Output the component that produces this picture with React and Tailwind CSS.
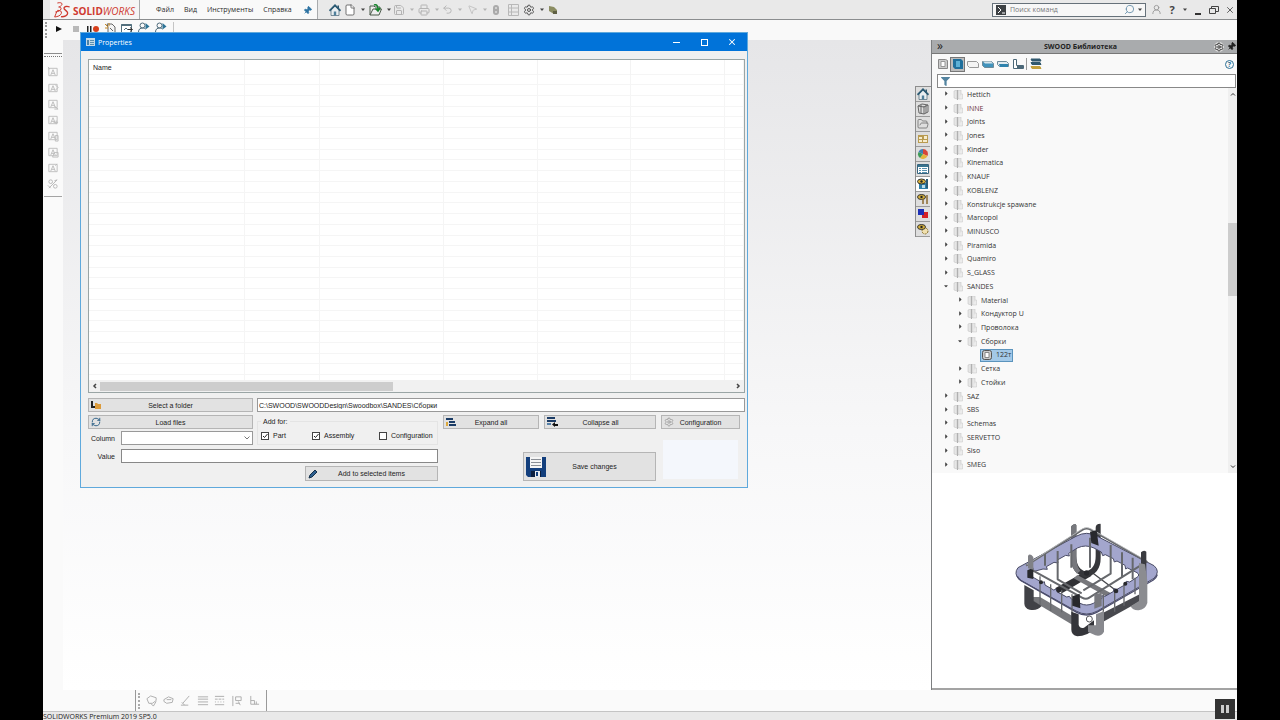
import React, { useState } from "react";
import {
  File,
  FolderOpen,
  MousePointer2,
  Pin,
  Printer,
  RefreshCw,
  Save,
  Search,
  Settings,
  Undo2,
  UserRound,
  X,
} from "lucide-react";
import { FaCaretDown, FaCaretRight, FaFilter } from "react-icons/fa";

const menus = ["Файл", "Вид", "Инструменты", "Справка"];

const treeItems = [
  { name: "Hettich" },
  { name: "INNE", color: "text-[#6b2f3c]" },
  { name: "Joints" },
  { name: "Jones" },
  { name: "Kinder" },
  { name: "Kinematica" },
  { name: "KNAUF" },
  { name: "KOBLENZ" },
  { name: "Konstrukcje spawane" },
  { name: "Marcopol" },
  { name: "MINUSCO" },
  { name: "Piramida" },
  { name: "Quamiro" },
  { name: "S_GLASS" },
  { name: "SANDES", open: true },
  { name: "Material", level: 1 },
  { name: "Кондуктор U", level: 1 },
  { name: "Проволока", level: 1 },
  { name: "Сборки", level: 1, open: true },
  { name: "122т", level: 2 },
  { name: "Сетка", level: 1 },
  { name: "Стойки", level: 1 },
  { name: "SAZ" },
  { name: "SBS" },
  { name: "Schemas" },
  { name: "SERVETTO" },
  { name: "Siso" },
  { name: "SMEG" },
];

const Caret = () => (
  <svg viewBox="0 0 4 3" className="h-[3px] w-1 shrink-0" fill="currentColor">
    <path d="M0 .5h4L2 3z" />
  </svg>
);

const HomeIcon = () => (
  <svg viewBox="0 0 12 12" className="h-3 w-3 shrink-0">
    <path d="M2 6l4-4 4 4v5.500H2z" fill="#e9eef1" stroke="#5b7483" strokeWidth=".8" />
    <path d="M4.800 7.500h2.400v4H4.800z" fill="#4f7f9b" />
    <path d="M8.500 1.500H10v3H8.500z" fill="#35586c" />
    <path d="M.5 6.800L6 1.300l5.500 5.500" fill="none" stroke="#2b5a74" strokeWidth="1.700" />
  </svg>
);

const ToolButton = ({ label, menu, width = "w-[25px]", children, className = "" }) => (
  <button
    title={label}
    aria-label={label}
    className={`flex h-full shrink-0 items-center gap-[5px] ${width} ${className}`}
  >
    {children}
    {menu && <Caret />}
  </button>
);

const Logo = () => (
  <div className="flex h-full w-[89px] shrink-0 items-center gap-[3px] bg-[#f5f5f5] pl-[4px] text-[#cf3a30]">
    <svg viewBox="0 0 48 48" className="h-4 w-4 shrink-0" fill="none" stroke="currentColor">
      <path d="M10 3c8-2 15-1 14 4-1 4-6 7-10 8 6 0 8 2 7 6-1 5-9 8-17 9" strokeWidth="3" />
      <path d="M2 45c3-8 6-16 9-20 8 0 13 3 11 9-2 7-11 10-20 11z" strokeWidth="3" />
      <path d="M47 15c-8-3-16-2-17 3-1 6 11 8 11 15 0 7-9 12-20 11" strokeWidth="4" />
    </svg>
    <span className="pt-[3px] text-[10px] leading-3">
      <b>SOLID</b>
      <i>WORKS</i>
    </span>
  </div>
);

const MenuBar = () => (
  <header className="flex h-5 shrink-0 items-stretch border-b border-[#8b8d8f] bg-[#e9e9e9] pl-[7px]">
    <Logo />
    <nav className="flex w-[179px] shrink-0 items-center gap-[10px] border-x border-[#a9abad] bg-[#f9f9f9] pt-px pl-4 text-[7px]">
      {menus.map((menu) => (
        <button key={menu} className="font-medium">
          {menu}
        </button>
      ))}
      <button aria-label="Pin menu" className="ml-auto mr-[5px] text-[#2f74a3]">
        <Pin size={9} fill="currentColor" className="rotate-45" />
      </button>
    </nav>

    <div className="flex items-center pl-[11px] text-[#454545]">
      <ToolButton label="Home" width="w-[15px]">
        <HomeIcon />
      </ToolButton>
      <ToolButton label="New" menu>
        <File size={12} fill="#fff" strokeWidth={1.5} />
      </ToolButton>
      <ToolButton label="Open" menu width="w-6">
        <svg viewBox="0 0 13 12" className="h-3 w-[13px]" fill="none" stroke="#4a5a4a">
          <path d="M1 11V2h4l1 1h5v2M1 11l3-6h8.500l-2.500 6z" fill="#eee" />
          <path d="M5 1c3-1 4 1 4 5M6.500 4.500l2.500 2.500 2-3" stroke="#16832b" strokeWidth="1.500" />
        </svg>
      </ToolButton>
      <ToolButton label="Save" menu className="text-[#b4b4b4]">
        <Save size={12} />
      </ToolButton>
      <ToolButton label="Print" menu width="w-6" className="text-[#b4b4b4]">
        <Printer size={12} />
      </ToolButton>
      <ToolButton label="Undo" menu className="text-[#b4b4b4]">
        <Undo2 size={11} />
      </ToolButton>
      <ToolButton label="Select" menu className="text-[#b4b4b4]">
        <MousePointer2 size={11} strokeWidth={1.5} />
      </ToolButton>
      <ToolButton label="Rebuild" width="w-4">
        <svg viewBox="0 0 8 12" className="h-3 w-2">
          <rect x="1" y="1" width="6" height="10" rx="3" fill="#aaa" />
          <circle cx="4" cy="4" r="1" fill="#ddd" />
          <circle cx="4" cy="8" r="1" fill="#ddd" />
        </svg>
      </ToolButton>
      <ToolButton label="File properties" width="w-[15px]">
        <svg viewBox="0 0 11 12" className="h-3 w-[11px]" fill="none" stroke="#b8b8b8">
          <path d="M.5.5h10v11H.5zM3.500.5v11M.5 4h10M.5 8h10" />
        </svg>
      </ToolButton>
      <ToolButton label="Options" menu>
        <Settings size={12} strokeWidth={1.8} />
      </ToolButton>
      <ToolButton label="Model" width="w-3">
        <svg viewBox="0 0 10 10" className="h-[10px] w-[10px]">
          <path d="M1 1l5 1 3 3v4H6L1 6z" fill="#8b8d62" />
          <path d="M5 9V6h4v3z" fill="#5f6044" />
        </svg>
      </ToolButton>
    </div>

    <div className="ml-auto flex items-center text-[#444]">
      <label className="mr-[3px] flex h-[14px] w-[154px] items-center border border-[#66717a] bg-[#f7f7f7] pl-[3px]">
        <svg viewBox="0 0 10 10" className="h-[10px] w-[10px] shrink-0">
          <path d="M0 0h10v10H0z" fill="#3d4144" />
          <path d="M2 2l3 3-3 3M6 8h3" stroke="#fff" fill="none" />
        </svg>
        <input
          aria-label="Поиск команд"
          placeholder="Поиск команд"
          className="min-w-0 flex-1 px-1 text-[7px] outline-none placeholder:text-[#77797b]"
        />
        <Search size={11} className="mr-[3px] -scale-x-100 text-[#6b93ad]" />
        <Caret />
        <span className="w-[3px]" />
      </label>
      <button aria-label="Account" className="w-[15px] pl-[2px] text-[#999]">
        <UserRound size={11} />
      </button>
      <button aria-label="Help" className="w-4 text-center text-[11px] leading-3 font-bold">
        ?
      </button>
      <button aria-label="Help menu" className="w-[11px] pl-[3px]">
        <Caret />
      </button>
      <button aria-label="Minimize" className="flex h-3 w-[14px] items-end justify-center pb-px">
        <span className="h-[2px] w-[6px] bg-[#333]" />
      </button>
      <button aria-label="Restore" className="flex w-[18px] justify-center">
        <svg viewBox="0 0 10 8" className="h-2 w-[10px]" fill="none" stroke="currentColor">
          <path d="M.5 2.500h6v5h-6zM2.500 2.500v-2h7v5h-3" />
        </svg>
      </button>
      <button aria-label="Close" className="flex w-[14px] justify-center">
        <X size={10} />
      </button>
    </div>
  </header>
);

const RunAsIcon = () => (
  <svg viewBox="0 0 12 11" className="h-[11px] w-3" fill="none" stroke="#4d6a7a">
    <circle cx="4.500" cy="3.500" r="2.500" />
    <path d="M.5 10c0-3 2-4 4-4 1.500 0 2 .5 3 1" />
    <path d="M7.500 1l4 3.500-4 3z" fill="#2c7396" stroke="none" />
  </svg>
);

const MacroBar = () => (
  <div className="flex h-5 shrink-0 items-start bg-[#f9f9f9] pl-[2px] pt-[2px]">
    <span className="h-4 w-[2px] border-l-2 border-dotted border-[#999]" />
    <div className="flex h-[18px] w-[127px] items-start gap-[5px] border-r border-[#c5c5c5] pl-[6px]">
      <button aria-label="Run macro" className="h-3 w-3">
        <svg viewBox="0 0 12 12">
          <path d="M3 4l6 3-6 3z" fill="#111" />
        </svg>
      </button>
      <button aria-label="Stop macro" className="h-3 w-3">
        <svg viewBox="0 0 12 12">
          <path d="M3 4h6v6H3z" fill="#b9b9b9" />
        </svg>
      </button>
      <button aria-label="Record macro" className="h-3 w-3">
        <svg viewBox="0 0 12 12">
          <path d="M0 4h1.500v6H0zM3 4h1.500v6H3z" fill="#222" />
          <circle cx="9" cy="7" r="3" fill="#d8401c" />
        </svg>
      </button>
      <button aria-label="New macro" className="h-3 w-3">
        <svg viewBox="0 0 12 12" fill="none" stroke="#666">
          <path d="M3 2h5l3 3v6H4V5z" fill="#f4f4f4" />
          <path d="M1 2l3 3M5 1v3M1 6h3" stroke="#c98a22" />
          <path d="M6 6l3 3" />
        </svg>
      </button>
      <button aria-label="Edit macro" className="h-3 w-3">
        <svg viewBox="0 0 12 12" fill="none" stroke="#53707e">
          <path d="M.5 2.500h10v8H.5z" fill="#fff" />
          <path d="M.5 3h10" strokeWidth="2" />
          <path d="M3 8l2-2 2 2" />
          <path d="M7 7.500h4M9 5.500l2.500 2L9 9.500" stroke="#333" />
        </svg>
      </button>
      <button aria-label="Run as user">
        <RunAsIcon />
      </button>
      <button aria-label="Run as user and stop">
        <RunAsIcon />
      </button>
    </div>
  </div>
);

const annotationMarks = [
  "M1 1l2 2M1 3h2",
  "M9 3l3 3-3 3",
  "M8 9l4 3M8 12h4",
  "M7 9h5M10 7v4",
  "M9 6h3v6H9z",
  "M8 7h4v5H6z",
  "M9 4l2-2",
];

const LeftToolbar = () => (
  <aside className="w-5 shrink-0 bg-[#fafafa] pt-[13px] pl-px">
    <div className="w-[18px] border-y border-t-[#8d8d8d] border-b-[#a4a4a4]">
      <div className="mt-[2px] border-t border-dotted border-[#777]" />
      <div className="flex flex-col items-center gap-1 pt-[9px] pb-[6px]">
        {annotationMarks.map((mark, i) => (
          <button key={i} aria-label={`Annotation ${i + 1}`} className="h-3 w-3">
            <svg viewBox="0 0 13 13" fill="none" stroke="#bcbcbc">
              <path d="M2 2.500h9v8H2z" />
              <path d="M4 10l2.500-6L9 10M5 8h3" />
              <path d={mark} />
            </svg>
          </button>
        ))}
        <button aria-label="Link annotations" className="h-3 w-3">
          <svg viewBox="0 0 13 13" fill="none" stroke="#b5b5b5">
            <circle cx="4" cy="4" r="2" />
            <circle cx="9" cy="9" r="2" />
            <path d="M2 11l9-9M8 3l3-1M1 8l3 3" />
          </svg>
        </button>
      </div>
    </div>
  </aside>
);

const PushButton = ({ icon, children, className = "" }) => (
  <button
    className={`flex shrink-0 items-center border border-[#b5b5b5] bg-[#e2e2e2] pl-[2px] pr-3 ${className}`}
  >
    {icon}
    <span className="flex-1 text-center">{children}</span>
  </button>
);

const columns = [
  { title: "Name", width: "w-[155px]" },
  { title: "", width: "w-[75px]" },
  { title: "", width: "w-[124px]" },
  { title: "", width: "w-[94px]" },
  { title: "", width: "w-[93px]" },
  { title: "", width: "w-[94px]" },
  { title: "", width: "" },
];

const FileTable = () => (
  <div className="flex h-[334px] flex-col border border-[#9aa5a5] bg-white">
    <table className="h-[320px] w-full table-fixed border-collapse">
      <thead>
        <tr className="h-[14px]">
          {columns.map((col, i) => (
            <th key={i} className={`${col.width} border-r border-[#f3f3f3] px-1 pt-px text-left font-normal`}>
              {col.title}
            </th>
          ))}
        </tr>
      </thead>
      <tbody>
        {Array.from({ length: 29 }).map((_, row) => (
          <tr key={row}>
            {columns.map((_, i) => (
              <td key={i} className="border-t border-r border-[#f5f5f5] p-0" />
            ))}
          </tr>
        ))}
      </tbody>
    </table>
    <div className="flex h-3 items-center bg-[#f1f1f1] px-[3px] text-[#444]">
      <button aria-label="Scroll left" className="w-2">
        <svg viewBox="0 0 6 6" className="h-[6px] w-[6px]" fill="none" stroke="currentColor">
          <path d="M4 1L2 3l2 2" strokeWidth="1.500" />
        </svg>
      </button>
      <div className="flex-1">
        <div className="h-[9px] w-[293px] bg-[#cdcdcd]" />
      </div>
      <button aria-label="Scroll right" className="w-[6px]">
        <svg viewBox="0 0 6 6" className="h-[6px] w-[6px]" fill="none" stroke="currentColor">
          <path d="M2 1l2 2-2 2" strokeWidth="1.500" />
        </svg>
      </button>
    </div>
  </div>
);

const CheckBox = ({ label, checked, onChange, className = "" }) => (
  <label className={`flex items-center gap-1 ${className}`}>
    <span className="grid h-2 w-2 shrink-0">
      <input
        type="checkbox"
        checked={checked}
        onChange={onChange}
        className="col-start-1 row-start-1 h-2 w-2 appearance-none border border-[#444] bg-white"
      />
      {checked && (
        <svg viewBox="0 0 8 8" className="pointer-events-none col-start-1 row-start-1" fill="none" stroke="#222">
          <path d="M2 4l1.500 1.500L6.500 2" />
        </svg>
      )}
    </span>
    {label}
  </label>
);

const FloppyIcon = () => (
  <svg viewBox="0 0 20 20" className="h-5 w-5 shrink-0">
    <path d="M0 0h20v20H2l-2-2z" fill="#133f7d" />
    <path d="M4 0h12v11H4z" fill="#f5f5f5" />
    <path d="M5 2.500h10M5 5.500h10M5 8.500h10" stroke="#8a8f96" />
    <path d="M5 14h10v6H5z" fill="#0c1f40" />
    <path d="M9 14h5v6H9z" fill="#e8ecf2" />
    <path d="M10 15h2v4h-2z" fill="#133f7d" />
  </svg>
);

const PropertiesWindow = () => {
  const [path, setPath] = useState("C:\\SWOOD\\SWOODDesign\\Swoodbox\\SANDES\\Сборки");
  const [value, setValue] = useState("");
  const [addFor, setAddFor] = useState({
    Part: true,
    Assembly: true,
    Configuration: false,
  });

  const toggle = (name) => setAddFor({ ...addFor, [name]: !addFor[name] });

  return (
    <section className="absolute top-8 left-[37px] w-[668px] border border-[#5fa9dc] bg-[#f0f0f0] font-['Liberation_Sans',sans-serif] text-[7px] leading-[9px] text-[#222]">
      <div className="flex h-[18px] items-center bg-[#0173d9] pr-px pl-[5px] font-['Open_Sans',sans-serif] text-white">
        <svg viewBox="0 0 9 8" className="mr-[3px] h-2 w-[9px]">
          <path d="M0 0h9v8H0z" fill="#c3d9e8" />
          <path d="M1 2h2v5H1z" fill="#4b83a8" />
          <path d="M4 2.500h4M4 4.500h4M4 6.500h4" stroke="#5c8fae" />
        </svg>
        <span>Properties</span>
        <div className="ml-auto flex">
          <button aria-label="Minimize window" className="grid w-7 place-items-center">
            <span className="h-px w-[7px] bg-white" />
          </button>
          <button aria-label="Maximize window" className="grid w-7 place-items-center">
            <span className="h-[7px] w-[7px] border border-white" />
          </button>
          <button aria-label="Close window" className="grid w-7 place-items-center">
            <X size={10} strokeWidth={2.5} />
          </button>
        </div>
      </div>

      <div className="pt-2 pr-[2px] pb-[6px] pl-[7px]">
        <FileTable />

        <div className="mt-[5px] flex gap-1">
          <PushButton
            className="h-[14px] w-[165px]"
            icon={
              <svg viewBox="0 0 10 10" className="h-[10px] w-[10px]">
                <path d="M0 1h2v5h3v2H0z" fill="#222" />
                <path d="M4 3h2l1 1h3v5H4z" fill="#dc9b3b" />
              </svg>
            }
          >
            Select a folder
          </PushButton>
          <input
            aria-label="Folder path"
            value={path}
            onChange={(e) => setPath(e.target.value)}
            className="h-[14px] min-w-0 flex-1 border border-[#999] bg-white px-px outline-none"
          />
        </div>

        <div className="mt-[3px] flex gap-[5px]">
          <div className="w-[350px] shrink-0">
            <div className="flex gap-1">
              <div className="w-[165px] shrink-0">
                <PushButton
                  className="h-[14px] w-full"
                  icon={<RefreshCw size={10} className="text-[#17507c]" />}
                >
                  Load files
                </PushButton>
                <div className="mt-[2px] flex items-center">
                  <label htmlFor="column" className="w-[27px] shrink-0 text-right">
                    Column
                  </label>
                  <span className="ml-[6px] grid h-[14px] flex-1">
                    <select
                      id="column"
                      className="col-start-1 row-start-1 appearance-none border border-[#999] bg-white outline-none"
                    >
                      <option value=""></option>
                    </select>
                    <svg
                      viewBox="0 0 6 4"
                      className="pointer-events-none col-start-1 row-start-1 mr-[3px] h-1 w-[6px] self-center justify-self-end"
                      fill="none"
                      stroke="#777"
                    >
                      <path d="M.5.5L3 3 5.500.5" />
                    </svg>
                  </span>
                </div>
              </div>
              <fieldset className="mt-[3px] h-[27px] flex-1 border border-[#e4e4e4] pl-[3px]">
                <legend className="px-[2px] leading-[7px]">Add for:</legend>
                <div className="flex items-center pt-[6px]">
                  <CheckBox
                    className="w-[51px]"
                    label="Part"
                    checked={addFor.Part}
                    onChange={() => toggle("Part")}
                  />
                  <CheckBox
                    className="w-[67px]"
                    label="Assembly"
                    checked={addFor.Assembly}
                    onChange={() => toggle("Assembly")}
                  />
                  <CheckBox
                    label="Configuration"
                    checked={addFor.Configuration}
                    onChange={() => toggle("Configuration")}
                  />
                </div>
              </fieldset>
            </div>
            <div className="mt-1 flex items-center">
              <label htmlFor="value" className="w-[27px] shrink-0 text-right">
                Value
              </label>
              <input
                id="value"
                value={value}
                onChange={(e) => setValue(e.target.value)}
                className="ml-[6px] h-[14px] flex-1 border border-[#888] bg-white px-1 outline-none"
              />
            </div>
            <div className="mt-[3px] flex justify-end">
              <PushButton
                className="h-[15px] w-[133px]"
                icon={
                  <svg viewBox="0 0 10 10" className="h-[10px] w-[10px]">
                    <path d="M1 9l1-3 5-5 2 2-5 5z" fill="#2c5f8f" stroke="#15304a" />
                  </svg>
                }
              >
                Add to selected items
              </PushButton>
            </div>
          </div>

          <div className="flex-1">
            <div className="flex gap-[5px]">
              <PushButton
                className="h-[14px] w-24"
                icon={
                  <svg viewBox="0 0 10 10" className="h-[10px] w-[10px]">
                    <path d="M0 1h7v2H0zM3 4h6v2H3zM3 7h7v2H3z" fill="#1b3c66" />
                    <path d="M0 5h2v4H0z" fill="#dba83e" />
                  </svg>
                }
              >
                Expand all
              </PushButton>
              <PushButton
                className="h-[14px] w-[112px]"
                icon={
                  <svg viewBox="0 0 11 10" className="h-[10px] w-[11px]">
                    <path d="M0 0h8v2H0zM0 3h9v2H0z" fill="#1b3c66" />
                    <path d="M0 6h4v2H0z" fill="#5580a8" />
                    <path d="M5 7.500l3-2.500v2h3v2H8v1z" fill="#111" />
                  </svg>
                }
              >
                Collapse all
              </PushButton>
              <PushButton
                className="h-[14px] w-[79px]"
                icon={<Settings size={10} className="shrink-0 text-[#999]" />}
              >
                Configuration
              </PushButton>
            </div>
            <div className="mt-[11px] flex items-end gap-[7px] pl-20">
              <PushButton className="mt-3 h-[29px] w-[133px]" icon={<FloppyIcon />}>
                Save changes
              </PushButton>
              <div className="mb-[2px] h-[39px] w-[75px] bg-[#f4f7fc]" />
            </div>
          </div>
        </div>
      </div>
    </section>
  );
};

const paneTabs = [
  { name: "Home", icon: <HomeIcon /> },
  {
    name: "Design library",
    icon: (
      <svg viewBox="0 0 12 12" className="h-3 w-3" fill="none" stroke="#666">
        <path d="M1 3l4-2 6 1v7l-4 2-5-1zM4 2v8M7 3v8M9 2v8M1 3l6 1 4-2" />
      </svg>
    ),
  },
  { name: "File explorer", icon: <FolderOpen size={12} strokeWidth={1.5} className="text-[#666]" /> },
  {
    name: "View palette",
    icon: (
      <svg viewBox="0 0 12 12" className="h-3 w-3">
        <path d="M1 2h10v8H1z" fill="#b99b50" />
        <path d="M2 4h3v2H2zM7 3h3v3H7zM2 7h3v2H2zM6 7h4v2H6z" fill="#f6eccc" />
      </svg>
    ),
  },
  {
    name: "Appearances",
    icon: (
      <svg viewBox="0 0 12 12" className="h-3 w-3">
        <path d="M6 6V1a5 5 0 0 1 4.500 7z" fill="#d6453a" />
        <path d="M6 6l4.500 2A5 5 0 0 1 3 10z" fill="#e5b33c" />
        <path d="M6 6l-3 4a5 5 0 0 1-1.500-6z" fill="#3f9b57" />
        <path d="M6 6L1.500 4A5 5 0 0 1 6 1z" fill="#3c7fb4" />
      </svg>
    ),
  },
  {
    name: "Custom properties",
    icon: (
      <svg viewBox="0 0 12 12" className="h-3 w-3">
        <path d="M.5 1.500h11v9H.5z" fill="#fff" stroke="#38647e" />
        <path d="M1 2h10v2H1z" fill="#38748f" />
        <path d="M2 5.500h2M2 7.500h2M2 9.500h2M5 5.500h5M5 7.500h5M5 9.500h5" stroke="#5991ae" />
      </svg>
    ),
  },
  {
    name: "SWOOD library",
    active: true,
    icon: (
      <svg viewBox="0 0 12 12" className="h-3 w-3">
        <path d="M2 5h9v6H2z" fill="#2e7fa8" />
        <path d="M5 7h3v3H5z" fill="#bcdcea" />
        <ellipse cx="4.500" cy="3.500" rx="4" ry="2.500" fill="#d7b23c" stroke="#333" />
        <circle cx="4.500" cy="3.500" r="1.200" fill="#222" />
        <path d="M10 1v9" stroke="#2b5a74" strokeWidth="2" />
      </svg>
    ),
  },
  {
    name: "SWOOD tools",
    icon: (
      <svg viewBox="0 0 12 12" className="h-3 w-3">
        <ellipse cx="4.500" cy="4" rx="4" ry="2.500" fill="#d7b23c" stroke="#333" />
        <circle cx="4.500" cy="4" r="1.200" fill="#222" />
        <path d="M6 6v5M10 2v9" stroke="#8b6a31" strokeWidth="1.500" />
      </svg>
    ),
  },
  {
    name: "Compare",
    icon: (
      <svg viewBox="0 0 12 12" className="h-3 w-3">
        <path d="M5 4h6v6H5z" fill="#d41f25" />
        <path d="M1 1h6v6H1z" fill="#1d2fb5" />
      </svg>
    ),
  },
  {
    name: "SWOOD settings",
    icon: (
      <svg viewBox="0 0 12 12" className="h-3 w-3">
        <circle cx="8" cy="8" r="3" fill="#f0e0ae" stroke="#8b7430" strokeDasharray="2 1" />
        <ellipse cx="4.500" cy="4" rx="4" ry="2.500" fill="#d7b23c" stroke="#333" />
        <circle cx="4.500" cy="4" r="1.200" fill="#222" />
      </svg>
    ),
  },
];

const TaskTabs = () => (
  <div className="mt-[46px] w-4 self-start border-t border-l border-[#8d8d8d] pr-px">
    {paneTabs.map((tab) => (
      <button
        key={tab.name}
        aria-label={tab.name}
        className={`flex h-[15px] w-full items-center justify-center border-b border-[#9a9a9a] ${
          tab.active ? "bg-white" : "bg-[#dedede]"
        }`}
      >
        {tab.icon}
      </button>
    ))}
  </div>
);

const FolderIcon = () => (
  <svg viewBox="0 0 10 10" className="h-[10px] w-[10px] shrink-0">
    <path d="M1 1l3-1v9l-3-1zM5 0h3v8l-3 1z" fill="#e6e6e6" stroke="#c6c6c6" strokeWidth=".6" />
    <path d="M4.500 0v10" stroke="#b0b0b0" />
    <path d="M8 4h1.500v5H6" fill="#ececec" stroke="#ccc" strokeWidth=".6" />
  </svg>
);

const TreeItem = ({ item }) => {
  if (item.level === 2) {
    return (
      <li className="flex items-center pl-12">
        <button className="flex h-[13px] items-center gap-1 border border-[#5b94bd] bg-[#a3c9e8] px-px">
          <svg viewBox="0 0 10 10" className="h-[10px] w-[10px]" fill="none">
            <rect x=".5" y=".5" width="9" height="9" rx="2" fill="#c9c9c9" stroke="#555" />
            <path d="M3 2.500h4v5H3z" fill="#fff" stroke="#888" />
          </svg>
          {item.name}
        </button>
      </li>
    );
  }
  return (
    <li className={`flex items-center ${item.level ? "pl-[25px]" : "pl-[11px]"} ${item.color || ""}`}>
      <button aria-label={`Toggle ${item.name}`} className="w-[10px] pb-[2px] text-[#444]">
        {item.open ? <FaCaretDown size={6} /> : <FaCaretRight size={7} />}
      </button>
      <FolderIcon />
      <span className="ml-[4px]">{item.name}</span>
    </li>
  );
};

const BasketPreview = () => (
  <svg viewBox="0 0 600 480" className="h-[160px] w-[200px]" fill="none" role="img" aria-label="122т">
    {/* lower rails and floor */}
    <path d="M108 288L262 380v-26L150 288z" fill="#77787c" />
    <path d="M322 372l130-72v-22l-130 66z" fill="#48494e" />
    <path d="M195 262l90-50 20 12-88 52z" fill="#303135" />
    <path d="M262 222l115 62-14 10-112-62z" fill="#76777b" />
    <path d="M190 268l90 50M300 210l80 60" stroke="#46474b" strokeWidth="4" />
    {/* rear uprights */}
    <path
      d="M243 82q0-12 14-12l2 3v92q0 40 28 46 30-6 30-46V80q0-12 14-12l1 2v102q0 46-44 58-45-12-45-58z"
      fill="#36373b"
    />
    <path d="M243 82q0-12 14-12l2 3v92q0 32 12 44l-10 9q-18-18-18-46z" fill="#77787d" />
    {/* shelf ring */}
    <path
      fillRule="evenodd"
      d="M84 200L258 106q32-18 64 0l170 88q20 17 0 38L322 330q-32 18-64 0L88 236q-18-18-4-36zM125 213q-6 10 8 18l24 14 6-3 2 10 26 15 8-3 3 9 28 15 8-2 6 8 26 13q20 10 40 0l26-15-1-8 10 2 26-15v-8l10 2 28-16v-8l10 2 22-14q10-7 0-14l-28-14-6 3-2-11-24-13-8 3-3-10-24-12-8 3-4-11-22-12q-25-12-50 0l-26 16 2 8-11-2-25 14 2 9-12-2-23 13 3 8-13-1z"
      fill="#a3a6cd"
      stroke="#4a4c66"
      strokeWidth="3"
    />
    <path d="M82 226q2 6 10 12l168 96q30 16 60 0l170-97q10-8 12-16" stroke="#4c4e6e" strokeWidth="4" />
    {/* wire frame */}
    <g stroke="#66686c" strokeWidth="6" strokeLinejoin="round">
      <path d="M108 194L278 86q12-7 24 0l168 96-172 108q-10 7-22 0L128 208" />
      <path d="M165 158v36M203 150v85l72 42M244 130v70M300 110v90M362 132v86l-82 50M396 154v76M428 170v65" />
      <path d="M150 226v86M182 250v80M215 268v66M246 280v70M340 280v54M374 268v64M402 248v66M435 230v50" strokeWidth="4" />
    </g>
    <path d="M110 191L278 83q12-7 24 0l166 95" stroke="#d2d3d5" strokeWidth="2" />
    <g fill="#28292d">
      <path d="M300 92l20-4 6 46-22-8zM247 286l22-8 2 44-24-8zM112 208l18-8v34l-18-4z" />
      <circle cx="290" cy="216" r="8" />
      <circle cx="206" cy="268" r="7" />
      <circle cx="378" cy="270" r="7" />
      <circle cx="153" cy="244" r="6" />
      <circle cx="406" cy="248" r="6" />
    </g>
    {/* corner feet */}
    <path d="M114 164q6-8 16 4v38l-16-4z" fill="#808186" />
    <path d="M103 252l28 16v32l24 15q-14 16-36 11-15-4-16-18z" fill="#404146" />
    <path d="M453 154q8-8 16-2v95h-16z" fill="#3a3b40" />
    <path d="M447 186l18 4 7 50v66q-6 20-26 22-18 1-24-12l25-16z" fill="#8b8c90" />
    <path d="M244 332l22 8v32q4 12 16 8l30-22v26q-20 22-50 22-18-4-18-20z" fill="#34353a" />
    <path d="M318 340l24-10v62q-8 16-26 11l-22-10v-20h24z" fill="#88898e" />
    <path d="M313 280l22-5v40l-22 8z" fill="#77787d" />
    <circle cx="298" cy="354" r="9" fill="#fff" stroke="#55565b" strokeWidth="3" />
  </svg>
);

const PanelIcon = ({ label, selected, children }) => (
  <button
    aria-label={label}
    className={`flex h-[15px] w-[15px] items-center justify-center ${
      selected ? "border border-[#777] bg-[#bcbcbc]" : ""
    }`}
  >
    <svg viewBox="0 0 12 12" className="h-3 w-3" fill="none">
      {children}
    </svg>
  </button>
);

const LibraryPanel = () => (
  <aside className="flex w-[306px] shrink-0 flex-col border-l border-[#7d7f81] bg-white">
    <div className="flex h-[13px] shrink-0 items-center bg-[#a9abad] pr-px pl-[5px] text-[#222]">
      <button aria-label="Collapse panel" className="w-[10px] pb-[2px] text-left text-[12px] leading-[10px]">
        »
      </button>
      <h2 className="flex-1 text-center text-[7px] font-bold">SWOOD Библиотека</h2>
      <button aria-label="Panel settings" className="mr-[3px] rounded-full bg-[#ddd]">
        <Settings size={10} />
      </button>
      <button aria-label="Pin panel">
        <Pin size={9} fill="currentColor" className="rotate-45" />
      </button>
    </div>

    <div className="flex h-[21px] shrink-0 items-center border-t border-[#777] bg-[#f9f9f9] pr-[3px] pl-[3px]">
      <PanelIcon label="Panels">
        <path d="M1.500 1.500h7l2 1v8h-9z" fill="#ccc" stroke="#888" />
        <path d="M4 3.500h4v5H4z" fill="#fff" stroke="#999" />
      </PanelIcon>
      <PanelIcon label="Assemblies" selected>
        <path d="M1 1h8l2 2v8H3l-2-2z" fill="#1f6f9c" />
        <path d="M4 3h4v6H4z" fill="#5cb0d6" />
      </PanelIcon>
      <PanelIcon label="Materials">
        <path d="M.5 3.500h9l2 2v4h-9l-2-2z" fill="#f4f4f4" stroke="#999" />
      </PanelIcon>
      <PanelIcon label="Boards">
        <path d="M.5 3.500h9l2 2v4h-9l-2-2z" fill="#4193bc" stroke="#6d8a99" />
        <path d="M1 3.500h8l2 2H3z" fill="#d7e5ec" />
      </PanelIcon>
      <PanelIcon label="Edges">
        <path d="M.5 3.500h9l2 2v3h-9l-2-2z" fill="#e0eaf0" stroke="#6d8a99" />
        <path d="M2 6h9v3H3z" fill="#2f83ae" />
      </PanelIcon>
      <PanelIcon label="Profiles">
        <path d="M1.500 1.500h3v6h7v3h-10z" fill="#fff" stroke="#4c6878" />
        <path d="M5 8h6v2H5z" fill="#4c6878" />
      </PanelIcon>
      <span className="mx-px h-3 w-px bg-[#999]" />
      <PanelIcon label="Layers">
        <path d="M1 1h9l1 2H2zM1 4.500h9l1 2H2z" fill="#31596e" stroke="#31596e" />
        <path d="M1 8.500h9l1 2H2z" fill="#c3a03c" stroke="#c3a03c" />
      </PanelIcon>
      <button
        aria-label="Library help"
        className="ml-auto h-[9px] w-[9px] rounded-full border border-[#2f7196] text-center text-[7px] leading-[7px] font-bold text-[#2f7196]"
      >
        ?
      </button>
    </div>

    <div className="shrink-0 bg-[#f9f9f9] pr-px pl-[5px]">
      <label className="flex h-[14px] items-center border border-[#888] bg-white pl-[3px]">
        <FaFilter size={9} className="text-[#5484a0]" />
        <input aria-label="Filter" className="min-w-0 flex-1 px-1 text-[7px] outline-none" />
      </label>
    </div>

    <div className="flex h-[385px] shrink-0 bg-[#f9f9f9]">
      <ul className="grid h-[384px] flex-1 auto-rows-fr text-[7px] leading-[10px] text-[#333]">
        {treeItems.map((item) => (
          <TreeItem key={item.name} item={item} />
        ))}
      </ul>
      <div className="flex w-[9px] flex-col items-center bg-[#f0f0f0] py-1 text-[#333]">
        <button aria-label="Scroll up">
          <svg viewBox="0 0 6 4" className="h-1 w-[6px]" fill="none" stroke="currentColor">
            <path d="M1 3.500l2-2 2 2" />
          </svg>
        </button>
        <div className="flex w-full flex-1 flex-col pt-[127px]">
          <div className="h-[73px] bg-[#cdcdcd]" />
        </div>
        <button aria-label="Scroll down">
          <svg viewBox="0 0 6 4" className="h-1 w-[6px]" fill="none" stroke="currentColor">
            <path d="M1 .5l2 2 2-2" />
          </svg>
        </button>
      </div>
    </div>

    <div className="flex flex-1 items-center justify-center border-b-2 border-[#a3a3a3] pl-[10px]">
      <BasketPreview />
    </div>
  </aside>
);

const lineTools = [
  { name: "Layer", path: "M1 4l4-3 6 2v3L7 9H3zM5 9l3 3 3-5" },
  { name: "Color", path: "M1 5l5-3 5 2-1 4-6 1-3-2zM4 5h5" },
  { name: "Line color", path: "M1 11h8M3 9l7-8M2 8l3 3" },
  { name: "Thickness", path: "M1 2h11M1 4.500h11M1 7.500h11M1 10.500h11" },
  { name: "Style", path: "M1 1.500h10M1 4.500h3M5 4.500h3M9 4.500h2M1 7.500h1M4 7.500h1M7 7.500h1M10 7.500h1M1 10.500h10" },
  { name: "Hide edges", path: "M2 1v11M5 2h6v4H5zM5 9h4M8 7l2 4" },
  { name: "Display mode", path: "M3 1v9h9M3 6h4v4M9 7v3" },
];

const LineToolbar = () => (
  <div className="flex h-[21px] shrink-0 bg-[#fafafa] pl-[92px]">
    <div className="flex w-[132px] items-center gap-[5px] border-x border-[#999] pl-[2px]">
      <span className="mr-px h-4 border-l-2 border-dotted border-[#aaa]" />
      {lineTools.map((tool) => (
        <button key={tool.name} aria-label={tool.name} className="h-3 w-3 shrink-0">
          <svg viewBox="0 0 13 13" fill="none" stroke="#aaa">
            <path d={tool.path} />
          </svg>
        </button>
      ))}
    </div>
  </div>
);

const App = () => {
  return (
    <div className="min-h-screen bg-black px-[43px] font-['Open_Sans','Noto_Sans',sans-serif] leading-[10px] text-[#2b2b2b]">
      <div className="relative flex h-screen flex-col overflow-hidden bg-white">
        <MenuBar />
        <MacroBar />
        <main className="flex min-h-0 flex-1">
          <LeftToolbar />
          <div className="flex flex-1 justify-end bg-linear-to-b from-[#e6e6e8] via-[#f7f7f8] via-60% to-white">
            <TaskTabs />
          </div>
          <LibraryPanel />
        </main>
        <LineToolbar />
        <footer className="h-[9px] shrink-0 border-t border-[#c4c4c4] bg-[#e9e9e9] text-[7px] text-[#222]">
          SOLIDWORKS Premium 2019 SP5.0
        </footer>

        <PropertiesWindow />

        <button
          aria-label="Pause"
          className="absolute right-[2px] bottom-px flex h-5 w-5 items-center justify-center gap-[2px] bg-[#333]"
        >
          <span className="h-2 w-[3px] bg-[#ccc]" />
          <span className="h-2 w-[3px] bg-[#ccc]" />
        </button>
      </div>
    </div>
  );
};

export default App;
